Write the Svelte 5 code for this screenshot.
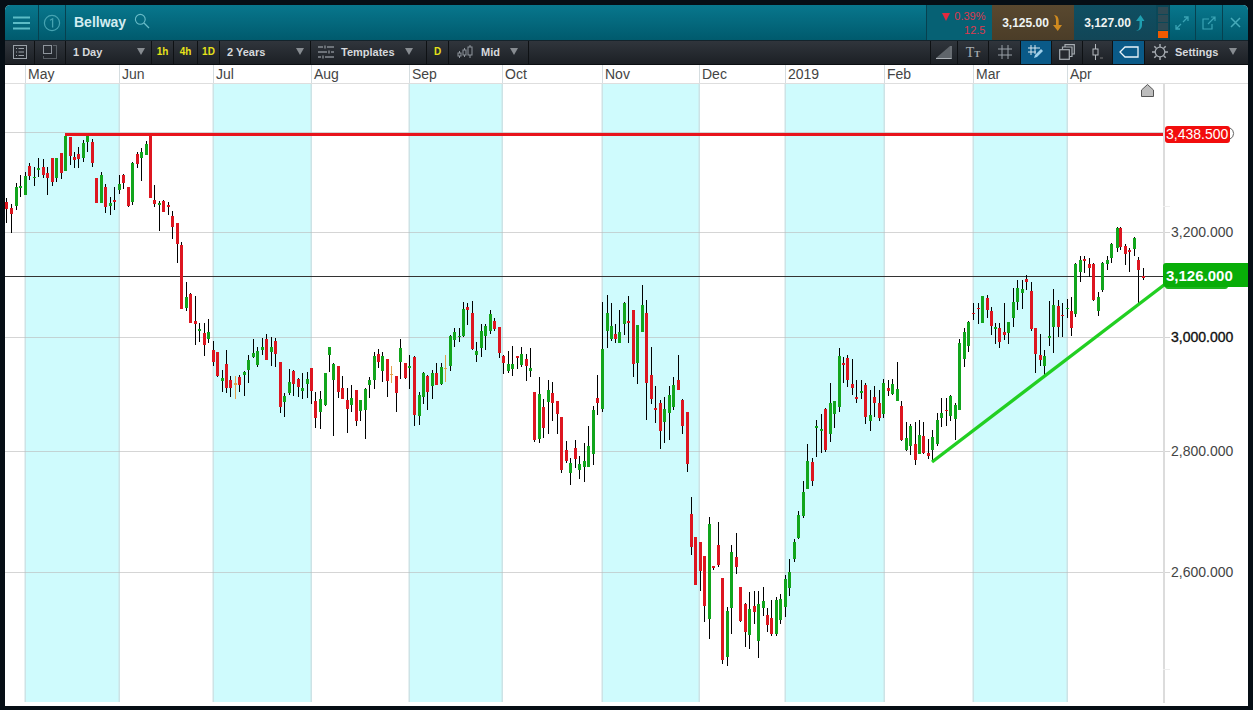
<script>
  const raw = `6,198,202,209,223,r 11,204,208,214,233,r 16,183,187,206,210,g 20,175,186,188,197,g 25,172,176,195,195,g 29,163,166,176,180,r 34,167,177,178,186,g 38,158,168,170,177,g 43,159,167,175,178,r 47,167,173,178,195,r 52,158,158,182,186,r 56,158,158,178,182,g 61,153,153,173,179,r 65,134,136,171,171,g 70,137,137,156,165,r 74,152,157,160,168,r 78,147,154,159,168,r 83,140,143,158,162,g 87,134,134,142,152,g 92,139,142,163,167,r 96,178,178,203,203,r 101,172,175,203,203,g 105,184,187,207,213,r 110,197,203,206,215,g 114,187,200,202,210,r 119,175,184,190,194,g 123,174,175,183,189,r 128,187,187,206,207,r 132,162,163,202,205,g 137,152,154,164,168,r 141,148,152,158,181,g 146,141,144,155,155,g 150,134,134,198,198,r 154,185,200,204,207,r 159,201,203,205,231,g 163,200,201,212,212,r 168,202,205,207,215,r 172,211,216,227,239,r 177,223,223,244,263,r 181,242,245,309,309,r 186,282,297,308,311,g 190,293,294,323,323,r 195,296,321,324,345,r 199,323,329,331,342,g 204,323,333,345,356,r 208,319,332,339,343,g 213,341,350,362,366,r 217,352,352,376,377,r 222,370,378,381,392,g 226,350,364,388,393,r 230,376,380,388,397,r 235,376,383,385,399,o 239,375,377,385,392,r 244,371,372,375,396,g 248,355,360,370,383,g 253,339,353,357,358,g 257,347,351,365,367,g 262,338,347,350,355,g 266,334,339,360,360,r 271,337,347,352,366,g 275,338,341,354,367,r 280,362,362,407,413,r 284,393,396,402,417,g 289,369,382,393,395,g 293,370,371,384,396,r 298,378,379,387,397,r 302,373,388,391,399,g 307,372,379,384,398,g 311,368,368,391,404,r 315,392,401,418,428,r 320,391,399,412,429,g 325,373,373,405,406,g 329,347,347,355,372,g 333,363,364,380,436,g 338,366,366,392,398,r 342,376,388,399,399,r 347,388,400,409,433,r 351,385,398,405,412,g 356,390,390,421,426,r 360,400,400,411,421,g 365,388,389,410,439,g 369,377,380,385,398,g 374,352,356,380,389,g 378,349,354,362,368,r 382,352,356,371,382,g 387,359,359,381,397,r 391,366,374,375,383,o 396,376,376,393,412,r 400,339,348,362,379,g 405,363,363,378,379,r 409,355,366,368,389,g 414,356,357,415,426,r 419,392,395,416,425,g 423,372,373,397,404,g 427,375,376,392,410,r 432,370,373,386,399,g 436,363,373,385,385,r 441,363,367,384,385,g 445,355,368,369,382,o 450,335,336,366,371,g 454,328,332,340,347,g 459,328,336,337,342,g 463,302,309,336,337,g 467,303,307,310,325,r 472,301,313,349,350,r 476,342,351,355,362,g 481,324,331,348,357,g 485,324,326,336,350,g 490,310,314,331,334,g 494,318,321,329,331,r 499,327,327,353,358,r 503,355,356,363,374,r 508,351,364,371,373,g 512,346,364,369,376,g 517,356,356,358,369,r 521,347,354,365,367,g 526,354,359,366,381,r 530,348,368,371,377,g 534,392,392,440,442,r 539,377,394,439,443,g 543,399,407,428,438,r 548,380,390,402,434,g 552,382,393,403,421,r 557,401,401,414,434,r 561,417,417,470,473,r 566,441,450,461,463,r 570,458,463,473,485,g 575,440,448,459,468,r 579,456,464,470,479,g 584,443,461,467,482,g 588,426,446,467,467,g 593,406,410,454,465,g 597,375,398,403,415,r 602,302,349,409,412,g 607,295,313,331,348,g 611,303,326,339,341,g 615,324,334,339,343,r 619,310,332,343,343,g 624,302,303,324,335,g 628,296,321,323,343,r 633,310,310,364,377,r 637,325,325,363,384,g 642,285,305,332,332,g 646,300,313,383,420,r 651,347,375,399,404,r 655,386,408,410,423,r 660,400,403,431,449,r 664,397,409,422,443,g 669,386,395,413,440,g 673,377,385,407,410,g 678,355,380,390,390,r 682,399,400,426,434,r 687,412,412,464,472,r 691,497,514,547,555,r 695,537,537,585,585,r 700,542,542,571,591,r 704,556,556,606,622,r 709,517,524,619,639,g 713,566,566,568,570,r 718,522,545,565,567,r 722,578,578,660,664,r 727,607,611,657,666,g 731,545,552,608,634,g 736,533,557,567,574,r 740,587,587,621,622,r 745,603,604,632,647,r 749,592,609,635,649,g 754,591,606,612,624,r 758,591,604,641,658,g 763,587,601,608,616,g 767,608,615,625,632,r 771,600,618,634,636,r 776,597,600,634,636,g 780,594,599,620,624,g 785,575,579,607,617,g 789,559,572,588,596,g 794,539,542,559,562,g 798,511,515,538,539,g 803,481,492,516,518,g 807,444,461,489,489,g 812,458,462,481,486,r 816,420,426,428,457,g 821,414,429,431,453,g 825,408,409,450,452,r 830,383,403,434,442,g 834,401,401,414,428,g 839,348,356,407,412,g 843,357,363,365,383,r 847,355,358,380,387,r 852,359,384,388,395,r 856,380,397,399,403,r 861,380,391,393,399,g 865,383,385,417,424,r 870,390,415,421,431,g 874,386,397,403,417,r 879,390,403,418,421,r 883,379,383,414,418,g 888,380,388,391,396,r 892,379,384,394,395,g 897,362,389,401,401,g 901,401,406,440,441,r 906,422,438,450,451,g 910,424,426,446,455,g 915,422,444,460,465,r 919,420,435,454,454,g 923,422,436,453,454,r 928,439,453,456,459,r 932,430,437,450,460,g 937,413,420,444,446,g 941,398,413,418,427,g 946,398,410,411,426,r 950,395,396,416,421,g 955,403,405,419,440,g 959,339,343,410,410,g 964,328,332,359,367,g 968,321,322,346,352,g 973,303,313,314,320,r 978,303,308,309,324,r 982,296,296,323,323,g 987,295,298,310,318,r 991,307,311,326,335,r 995,323,327,329,344,g 999,323,328,342,348,r 1004,303,332,335,340,r 1008,322,322,333,344,g 1013,288,302,318,327,g 1017,280,288,302,310,g 1022,280,289,293,309,g 1026,275,279,282,290,r 1031,282,291,329,331,r 1035,328,328,354,373,r 1040,334,355,360,366,r 1044,350,356,366,376,g 1049,301,336,338,346,g 1053,289,305,327,353,g 1058,300,306,327,337,r 1062,303,315,316,337,r 1067,299,308,309,318,g 1071,297,311,328,336,r 1075,263,264,314,317,g 1080,256,260,272,282,g 1084,256,259,261,273,r 1089,258,264,268,277,r 1093,263,264,300,301,r 1098,292,297,311,316,g 1102,262,263,290,292,g 1107,256,260,264,270,g 1111,243,244,258,263,g 1117,227,228,248,252,g 1120,227,228,247,250,r 1125,244,246,254,265,r 1129,248,250,252,272,r 1134,237,238,249,256,g 1138,257,260,270,303,r 1143,268,276,278,280,r`;
  const candles = raw.split(' ').map((s) => {
    const p = s.split(',');
    return { x: +p[0], h: +p[1], t: +p[2], b: +p[3], l: +p[4], c: p[5] };
  });
  const edges = [25, 119, 213, 311, 409, 502, 602, 699, 785, 884, 973, 1067];
  const names = ['May', 'Jun', 'Jul', 'Aug', 'Sep', 'Oct', 'Nov', 'Dec', '2019', 'Feb', 'Mar', 'Apr'];
  const months = names.map((n, i) => ({ n, w: (edges[i + 1] ?? 1248) - edges[i] }));
  const bands = [[25, 119], [213, 311], [409, 502], [602, 699], [785, 884], [973, 1067]];
  const grid = [132, 232, 337, 451, 572];
  const labels = [[232, '3,200.000'], [337, '3,000.000'], [451, '2,800.000'], [572, '2,600.000']];
  const colour = { r: '#dd1620', g: '#12a51c', o: '#e3a04c' };
</script>

<div class="window">
  <header class="title">
    <button class="tbtn menu" aria-label="menu">
      <svg width="17" height="14" viewBox="0 0 17 14"><path d="M0 1.5h17M0 7h17M0 12.5h17" stroke="#5cbcc6" stroke-width="2.2"/></svg>
    </button>
    <button class="tbtn num" aria-label="one">
      <svg width="18" height="18" viewBox="0 0 18 18"><circle cx="9" cy="9" r="7.6" fill="none" stroke="#46a3b1" stroke-width="1.2"/><path d="M7 6.2 9.6 4.8V13.4" fill="none" stroke="#46a3b1" stroke-width="1.3"/></svg>
    </button>
    <span class="name">Bellway</span>
    <svg class="search" width="16" height="16" viewBox="0 0 16 16"><circle cx="6.3" cy="6.3" r="4.9" fill="none" stroke="#69bcc8" stroke-width="1.1"/><path d="M10 10l5 5" stroke="#69bcc8" stroke-width="1.3"/></svg>
    <div class="spacer"></div>
    <div class="change">
      <div class="pct"><i class="tri"></i>0.39%</div>
      <div>12.5</div>
    </div>
    <div class="price sell">3,125.00
      <svg width="11" height="18" viewBox="0 0 11 18"><path d="M2 1c3 .3 4.600 2 4.700 6v4H10L5.800 17 1 11h3V7C4 4 3.500 2.500 2 1z" fill="#cf8a1f"/></svg>
    </div>
    <div class="price buy">3,127.00
      <svg width="11" height="18" viewBox="0 0 11 18"><path d="M2 17c2.500-.5 3.500-2.500 3.500-6V7H2L6.500 1 10.500 7H8v4c0 3-2 5.500-6 6z" fill="#1f9fb0"/></svg>
    </div>
    <div class="depth"><i></i><i></i><i></i><i class="on"></i></div>
    <button class="tbtn win" aria-label="expand">
      <svg width="14" height="14" viewBox="0 0 14 14"><path d="M8 6l5-5M9 1h4v4M6 8l-5 5M1 9v4h4" fill="none" stroke="#3aa3b4" stroke-width="1.3"/></svg>
    </button>
    <button class="tbtn win" aria-label="pop out">
      <svg width="14" height="14" viewBox="0 0 14 14"><path d="M10 8v5H1V3h6M6 8l7-7M9 1h4v4" fill="none" stroke="#3aa3b4" stroke-width="1.2"/></svg>
    </button>
    <button class="tbtn win" aria-label="close">
      <svg width="11" height="11" viewBox="0 0 11 11"><path d="M1 1l9 9M10 1l-9 9" stroke="#46aab9" stroke-width="1.5"/></svg>
    </button>
  </header>

  <nav class="tools">
    <div class="cell c30"><svg width="14" height="14" viewBox="0 0 14 14" fill="none" stroke="#9aa1a8"><rect x=".5" y=".5" width="13" height="13"/><path d="M3 3.500h1M5.500 3.500H11M3 7h1M5.500 7H11M3 10.500h1M5.500 10.500H11"/></svg></div>
    <div class="cell c31"><svg width="14" height="14" viewBox="0 0 14 14" fill="none" stroke="#8f969d"><rect x=".5" y=".5" width="8" height="8"/><path d="M10.500.5h3v13H.5v-3" stroke-dasharray="1 1"/></svg></div>
    <div class="cell sel w86"><span>1 Day</span><i class="caret"></i></div>
    <div class="cell yel w22">1h</div>
    <div class="cell yel w24">4h</div>
    <div class="cell yel w22">1D</div>
    <div class="cell sel w91"><span>2 Years</span><i class="caret"></i></div>
    <div class="cell w116">
      <svg width="16" height="14" viewBox="0 0 16 14" fill="none" stroke="#858b91" stroke-width="1.400"><path d="M0 2h5M9 2h7M7 .5v3M0 7h9M13 7h3M11 5.500v3M0 12h3M7 12h9M5 10.500v3"/></svg>
      <span class="t1">Templates</span><i class="caret"></i>
    </div>
    <div class="cell yel w22">D</div>
    <div class="cell w80">
      <svg width="16" height="14" viewBox="0 0 16 14" fill="none" stroke="#8f969d"><path d="M2.500 6v7M7.500 3v9M13 0v13"/><rect x="1" y="8" width="3" height="3" fill="#262a30"/><rect x="6" y="5" width="3" height="5" fill="#262a30"/><rect x="11" y="2" width="4" height="8" fill="#262a30"/></svg>
      <span class="t2">Mid</span><i class="caret"></i>
    </div>
    <div class="spacer"></div>
    <div class="cell w28"><svg width="16" height="14" viewBox="0 0 16 14"><path d="M0 13 14 1v12z" fill="#5f656b"/><path d="M0 13.500h15.500M15 1v13" stroke="#aab0b5" fill="none"/></svg></div>
    <div class="cell w31 tt"><b>T</b><small>T</small></div>
    <div class="cell w32"><svg width="16" height="16" viewBox="0 0 16 16"><path d="M5 1v14M11 1v14M1 5h14M1 11h14" stroke="#9aa1a8"/></svg></div>
    <div class="cell w31 act"><svg width="18" height="16" viewBox="0 0 18 16"><path d="M4 1v10M8 1v9M1 4h12M1 8h8" stroke="#d6e6ef"/><path d="M7 14l1-3 6-6 2 2-6 6z" fill="#9fd0ea"/></svg></div>
    <div class="cell w31"><svg width="16" height="16" viewBox="0 0 16 16" fill="none" stroke="#a7adb3" stroke-width="1.200"><rect x=".7" y="5.700" width="9.600" height="9.600" fill="#262a30"/><path d="M3.500 5.500V3h9.500v9.500h-2.500M6 3V.7h9.300V10H13"/></svg></div>
    <div class="cell w30"><svg width="14" height="16" viewBox="0 0 14 16" fill="none" stroke="#b5babf"><path d="M4.500 0v5M4.500 11v5"/><rect x="2" y="5" width="5" height="6" fill="#262a30"/><path d="M9 14h3" stroke="#777"/></svg></div>
    <div class="cell w32 act"><svg width="20" height="12" viewBox="0 0 20 12"><path d="M6 1h13v10H6L1 6z" fill="none" stroke="#eaf4f9" stroke-width="1.300"/></svg></div>
    <div class="cell set">
      <svg width="16" height="16" viewBox="0 0 16 16" fill="none" stroke="#a5abb1"><circle cx="8" cy="8" r="4.800" stroke-width="1.300"/><path d="M8 0v3M8 13v3M0 8h3M13 8h3M2.300 2.300l2 2M11.700 11.700l2 2M13.700 2.300l-2 2M4.300 11.700l-2 2" stroke-width="1.500"/></svg>
      <span class="t3">Settings</span><i class="caret"></i>
    </div>
  </nav>

  <div class="months">
    <div class="lead"></div>
    {#each months as m}
      <div class="month" style="width:{m.w}px">{m.n}</div>
    {/each}
  </div>

  <svg class="chart" viewBox="5 84 1243 622" width="1243" height="622">
    {#each bands as b}
      <rect x={b[0]} y="84" width={b[1] - b[0]} height="618" fill="#cffbfd"/>
    {/each}
    {#each edges as e}
      <rect x={e - 0.5} y="84" width="1.5" height="618" fill="#cde3e6"/>
    {/each}
    {#each grid as y}
      <rect x="5" {y} width="1165" height="1" fill="#b9b9b9" opacity="0.6"/>
    {/each}
    <rect x="1163" y="84" width="2" height="619" fill="#dcdcdc"/>
    <rect x="1163" y="206" width="7" height="1" fill="#eeeeee"/>
    <rect x="1163" y="669" width="7" height="1" fill="#eeeeee"/>
    <rect x="5" y="276" width="1160" height="1" fill="#333"/>

    {#each candles as k}
      <rect x={k.x} y={k.h} width="1" height={k.l - k.h} fill={k.c === 'o' ? colour.o : '#000'}/>
      <rect x={k.x - 1} y={k.t} width="3" height={Math.max(k.b - k.t, 1)} fill={colour[k.c]}/>
    {/each}

    <rect x="65" y="133" width="1098" height="3" fill="#e8141c"/>
    <line x1="932" y1="462" x2="1164" y2="285" stroke="#22cf22" stroke-width="3.4"/>

    <path d="M1141.500 96.500V90l6-5.500 6 5.500v6.500z" fill="#bdbdbd" stroke="#555"/>

    {#each labels as l}
      <text class="tick" class:strong={l[1] === '3,000.000'} x="1171" y={l[0] + 5}>{l[1]}</text>
    {/each}
    <path d="M1230 128a6 6 0 0 1 0 11" fill="none" stroke="#666"/>

    <rect x="1165" y="126" width="65" height="17" rx="3" fill="#f20d0d"/>
    <text class="flag" x="1166" y="139">3,438.500</text>

    <rect x="1165" y="282" width="63" height="7" rx="3" fill="#1eb51e"/>
    <path d="M1163 266a3 3 0 0 1 3-3h82v24h-82a3 3 0 0 1-3-3z" fill="#08ad08"/>
    <text class="flag big" x="1166" y="281">3,126.000</text>
  </svg>
</div>

<style>
  :global(body) {
    margin: 0;
    background: #060e15;
  }
  .window {
    width: 1243px;
    height: 701px;
    margin: 5px 5px 0;
    background: #fff;
    display: flex;
    flex-direction: column;
    font-family: "Liberation Sans", Arial, sans-serif;
    overflow: hidden;
    border-radius: 5px 5px 0 0;
  }
  .title {
    height: 35px;
    flex: none;
    display: flex;
    align-items: stretch;
    background: linear-gradient(#08778d, #005a6d);
    border-bottom: 1px solid #14232b;
    box-sizing: content-box;
  }
  .tbtn {
    border: 0;
    padding: 0;
    background: none;
    display: flex;
    align-items: center;
    justify-content: center;
  }
  .menu { width: 34px; border-right: 1px solid #07414f; }
  .num { width: 27px; border-right: 1px solid #07414f; }
  .name {
    margin-left: 8px;
    font-size: 14px;
    font-weight: bold;
    color: #d2edf1;
    line-height: 35px;
  }
  .search { margin: 8px 0 0 8px; }
  .spacer { flex: 1; }
  .change {
    width: 59px;
    padding-right: 6px;
    border-left: 1px solid #07414f;
    text-align: right;
    font-size: 11px;
    line-height: 14px;
    padding-top: 4px;
    color: #dd3a4e;
    background: #066174;
  }
  .pct { position: relative; }
  .tri {
    display: inline-block;
    border: 4.5px solid transparent;
    border-top: 8px solid #e22a3e;
    border-bottom: 0;
    margin-right: 4px;
    vertical-align: -1px;
  }
  .price {
    width: 82px;
    box-sizing: border-box;
    display: flex;
    align-items: center;
    justify-content: center;
    gap: 3px;
    font-size: 12px;
    font-weight: bold;
    color: #eef3f3;
  }
  .sell { background: linear-gradient(#59482f, #4b3d28); }
  .buy { background: linear-gradient(#0f4f62, #124657); }
  .depth {
    width: 13px;
    box-sizing: border-box;
    padding: 2px 1px 2px 2px;
    display: flex;
    flex-direction: column;
    gap: 1px;
    background: #0b4858;
  }
  .depth i {
    flex: 1;
    background: #2f4a54;
  }
  .depth i.on { background: #f05a00; }
  .win {
    width: 26.5px;
    border-left: 1px solid #07414f;
  }
  .tools {
    height: 23px;
    flex: none;
    display: flex;
    align-items: stretch;
    background: linear-gradient(#30353c, #1c2025);
    border-bottom: 1px solid #0c0f12;
    font-size: 11px;
    font-weight: bold;
    color: #d6d9dc;
  }
  .cell {
    box-sizing: border-box;
    display: flex;
    align-items: center;
    justify-content: center;
    border-right: 1px solid #0e1114;
    flex: none;
    padding-bottom: 1px;
  }
  .c30 { width: 30px; }
  .c31 { width: 31px; }
  .sel { justify-content: space-between; padding: 0 6px 2px 7px; }
  .w86 { width: 86px; }
  .w91 { width: 91px; }
  .w22 { width: 22px; }
  .w24 { width: 24px; }
  .w28 { width: 28px; border-left: 1px solid #0e1114; }
  .w30 { width: 30px; }
  .w31 { width: 31px; }
  .w32 { width: 32px; }
  .w116 { width: 116px; justify-content: flex-start; padding-left: 7px; padding-bottom: 2px; }
  .w80 { width: 80px; justify-content: flex-start; padding-left: 8px; padding-bottom: 2px; }
  .yel { color: #e6e21a; font-size: 10px; padding-bottom: 2px; }
  .t1 { margin-left: 7px; margin-right: 10px; }
  .t2 { margin-left: 8px; margin-right: 10px; }
  .t3 { margin-left: 7px; margin-right: 11px; }
  .caret {
    width: 0;
    height: 0;
    border: 4px solid transparent;
    border-top: 7px solid #878c91;
    border-bottom: 0;
  }
  .act { background: #0a5a88; }
  .tt { font-family: "Liberation Serif", serif; color: #a5abb1; align-items: baseline; padding-top: 4px; }
  .tt b { font-size: 14px; font-weight: normal; }
  .tt small { font-size: 9px; }
  .set { width: 103px; border-right: 0; justify-content: flex-start; padding: 0 0 2px 7px; }
  .months {
    height: 18px;
    flex: none;
    display: flex;
    border-bottom: 1px solid #dedede;
    font-size: 14px;
    color: #444;
    box-sizing: content-box;
  }
  .lead { width: 20px; flex: none; }
  .month {
    box-sizing: border-box;
    flex: none;
    border-left: 1px solid #d5dde0;
    padding-left: 2px;
    line-height: 19px;
  }
  .chart { display: block; flex: none; }
  .tick {
    font-family: "Liberation Sans", Arial, sans-serif;
    font-size: 14px;
    fill: #444;
  }
  .tick.strong { fill: #111; stroke: #111; stroke-width: 0.35px; }
  .flag {
    font-family: "Liberation Sans", Arial, sans-serif;
    font-size: 14px;
    fill: #fff;
  }
  .flag.big { font-weight: bold; font-size: 15px; }
</style>
